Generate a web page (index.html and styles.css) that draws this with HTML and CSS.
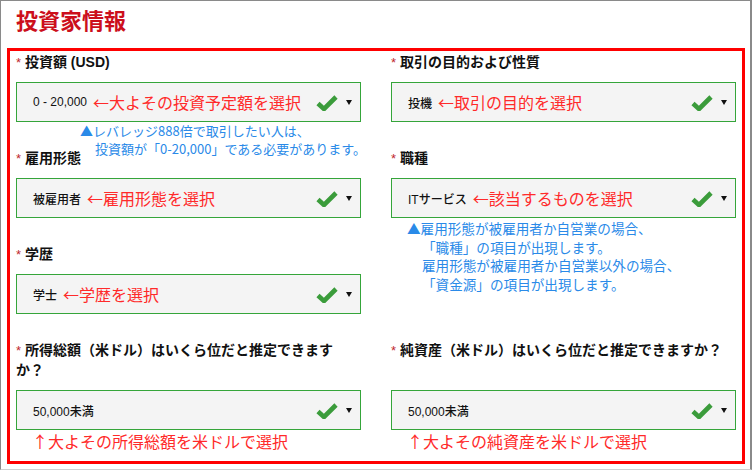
FILE: index.html
```html
<!DOCTYPE html>
<html lang="ja">
<head>
<meta charset="utf-8">
<link rel="stylesheet" href="styles.css">
</head>
<body>
<div class="page">
  <h1 class="title">投資家情報</h1>
  <div class="box">
    <div class="grid">
      <div class="field">
        <div class="label"><span class="req">*</span> 投資額 (USD)</div>
        <div class="select">
          <span class="value">0 - 20,000</span><span class="hint">←大よその投資予定額を選択</span>
          <span class="icons"><svg class="check" viewBox="0 0 22 16" width="22" height="16"><path d="M2 8.5 L8 14 L20 2" fill="none" stroke="#3b9c3b" stroke-width="4.6"/></svg><span class="caret"></span></span>
          <div class="note note-left">▲レバレッジ888倍で取引したい人は、<br>投資額が「0-20,000」である必要があります。</div>
        </div>
      </div>
      <div class="field">
        <div class="label"><span class="req">*</span> 取引の目的および性質</div>
        <div class="select">
          <span class="value">投機</span><span class="hint">←取引の目的を選択</span>
          <span class="icons"><svg class="check" viewBox="0 0 22 16" width="22" height="16"><path d="M2 8.5 L8 14 L20 2" fill="none" stroke="#3b9c3b" stroke-width="4.6"/></svg><span class="caret"></span></span>
        </div>
      </div>
      <div class="field">
        <div class="label"><span class="req">*</span> 雇用形態</div>
        <div class="select">
          <span class="value">被雇用者</span><span class="hint">←雇用形態を選択</span>
          <span class="icons"><svg class="check" viewBox="0 0 22 16" width="22" height="16"><path d="M2 8.5 L8 14 L20 2" fill="none" stroke="#3b9c3b" stroke-width="4.6"/></svg><span class="caret"></span></span>
        </div>
      </div>
      <div class="field">
        <div class="label"><span class="req">*</span> 職種</div>
        <div class="select">
          <span class="value">ITサービス</span><span class="hint">←該当するものを選択</span>
          <span class="icons"><svg class="check" viewBox="0 0 22 16" width="22" height="16"><path d="M2 8.5 L8 14 L20 2" fill="none" stroke="#3b9c3b" stroke-width="4.6"/></svg><span class="caret"></span></span>
          <div class="note note-right">▲雇用形態が被雇用者か自営業の場合、<br>「職種」の項目が出現します。<br>雇用形態が被雇用者か自営業以外の場合、<br>「資金源」の項目が出現します。</div>
        </div>
      </div>
      <div class="field">
        <div class="label"><span class="req">*</span> 学歴</div>
        <div class="select">
          <span class="value">学士</span><span class="hint">←学歴を選択</span>
          <span class="icons"><svg class="check" viewBox="0 0 22 16" width="22" height="16"><path d="M2 8.5 L8 14 L20 2" fill="none" stroke="#3b9c3b" stroke-width="4.6"/></svg><span class="caret"></span></span>
        </div>
      </div>
      <div class="field empty"></div>
      <div class="field">
        <div class="label"><span class="req">*</span> 所得総額（米ドル）はいくら位だと推定できますか？</div>
        <div class="select">
          <span class="value">50,000未満</span>
          <span class="icons"><svg class="check" viewBox="0 0 22 16" width="22" height="16"><path d="M2 8.5 L8 14 L20 2" fill="none" stroke="#3b9c3b" stroke-width="4.6"/></svg><span class="caret"></span></span>
        </div>
        <div class="below">↑大よその所得総額を米ドルで選択</div>
      </div>
      <div class="field">
        <div class="label"><span class="req">*</span> 純資産（米ドル）はいくら位だと推定できますか？</div>
        <div class="select">
          <span class="value">50,000未満</span>
          <span class="icons"><svg class="check" viewBox="0 0 22 16" width="22" height="16"><path d="M2 8.5 L8 14 L20 2" fill="none" stroke="#3b9c3b" stroke-width="4.6"/></svg><span class="caret"></span></span>
        </div>
        <div class="below">↑大よその純資産を米ドルで選択</div>
      </div>
    </div>
  </div>
</div>
</body>
</html>
```
FILE: styles.css
```css
html, body {
  margin: 0;
  padding: 0;
  background: #fff;
}
body {
  font-family: "Liberation Sans", "Noto Sans CJK JP", sans-serif;
  color: #111;
}
.page {
  box-sizing: border-box;
  width: 752px;
  height: 470px;
  border-top: 1px solid #8a8a8a;
  border-left: 1px solid #8a8a8a;
  border-right: 2px solid #8a8a8a;
  border-bottom: 1px solid #d0d0d0;
  overflow: hidden;
}
.title {
  margin: 0;
  padding: 4px 0 0 15px;
  height: 47px;
  box-sizing: border-box;
  font-family: "Noto Sans CJK JP", sans-serif;
  font-size: 22px;
  line-height: 28px;
  font-weight: 700;
  color: #cc0f1c;
}
.box {
  margin-left: 6px;
  width: 738px;
  height: 416px;
  box-sizing: border-box;
  border: 3px solid #ff0000;
  padding: 1px 6px 0 6px;
}
.grid {
  display: grid;
  grid-template-columns: 345px 345px;
  grid-auto-rows: auto;
  column-gap: 30px;
  row-gap: 26px;
}
.field {
  display: flex;
  flex-direction: column;
}
.label {
  flex: 1;
  min-height: 20px;
  font-size: 14px;
  line-height: 20px;
  font-weight: 700;
  color: #111;
  margin-bottom: 10px;
  padding-right: 6px;
}
.req {
  color: #c0282d;
  font-weight: 400;
  font-size: 13px;
  line-height: 1;
}
.select {
  position: relative;
  box-sizing: border-box;
  height: 40px;
  flex: none;
  border: 1px solid #35a53a;
  background: #f4f4f4;
  display: flex;
  align-items: center;
  padding: 0 8px 0 16px;
}
.value {
  font-size: 12px;
  font-weight: 500;
  color: #111;
  white-space: nowrap;
}
.hint {
  margin-left: 6px;
  font-family: "Noto Sans CJK JP", sans-serif;
  font-size: 16px;
  color: #ff2a2a;
  white-space: nowrap;
}
.icons {
  margin-left: auto;
  display: flex;
  align-items: center;
}
.check {
  display: block;
  margin-top: 2px;
}
.caret {
  display: block;
  margin-left: 8px;
  width: 0;
  height: 0;
  border-top: 5px solid #111;
  border-left: 3px solid transparent;
  border-right: 3px solid transparent;
}
.note {
  position: absolute;
  top: 100%;
  font-family: "Noto Sans CJK JP", sans-serif;
  color: #2a8ae8;
  white-space: nowrap;
  padding-left: 15px;
  text-indent: -15px;
}
.note-left {
  left: 63px;
  margin-top: 1px;
  font-size: 13px;
  line-height: 18px;
}
.note-right {
  left: 15px;
  margin-top: 2px;
  font-size: 13.6px;
  line-height: 18.5px;
}
.below {
  font-family: "Noto Sans CJK JP", sans-serif;
  font-size: 16px;
  line-height: 20px;
  color: #ff2a2a;
  margin-top: 1px;
  padding-left: 16px;
}
```
